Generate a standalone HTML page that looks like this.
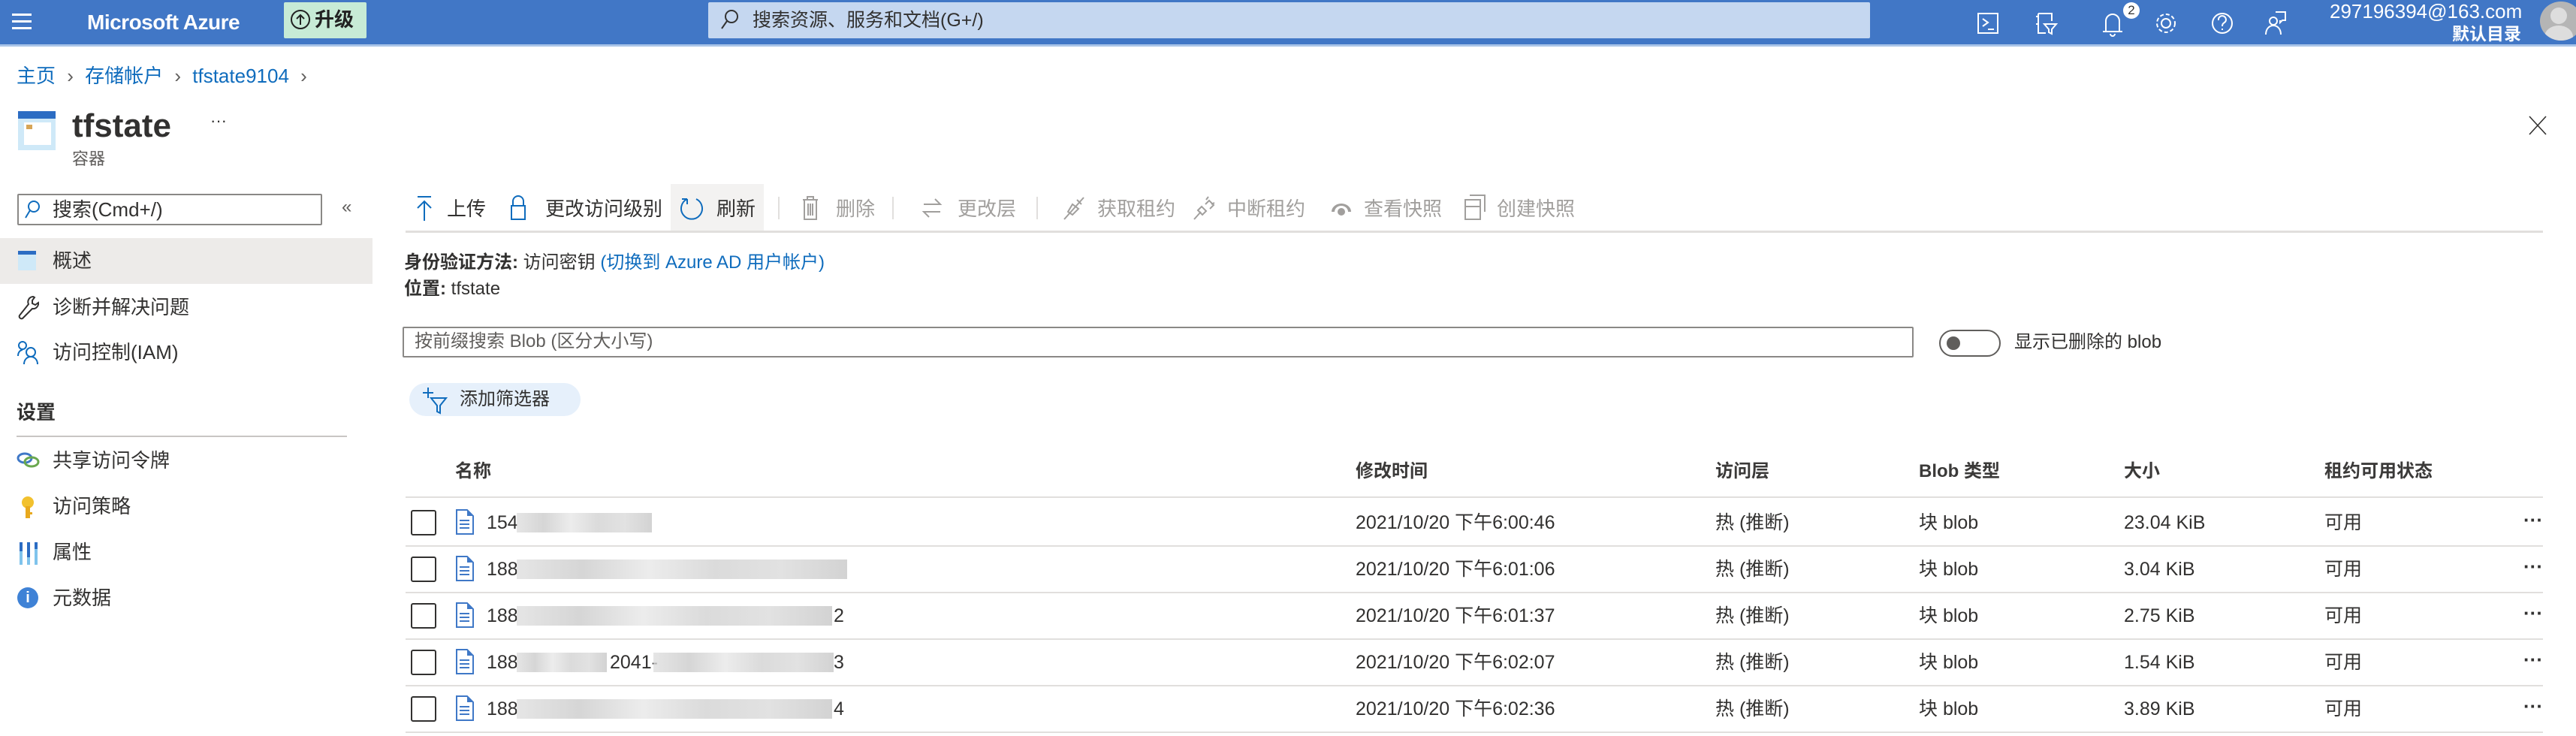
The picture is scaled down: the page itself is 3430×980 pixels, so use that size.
<!DOCTYPE html>
<html><head><meta charset="utf-8">
<style>
*{margin:0;padding:0;box-sizing:border-box}
body{width:3430px;height:980px;overflow:hidden;background:#fff;font-family:"Liberation Sans","Noto Sans CJK SC",sans-serif;color:#323130;position:relative}
.a{position:absolute;white-space:nowrap}
.t{font-size:25px;line-height:30px}
.top{position:absolute;left:0;top:0;width:3430px;height:62px;background:#4177c6;border-bottom:3px solid #a9c4e8}
.w{color:#fff}
.dis{color:#a19f9d}
.blue{color:#0f6cbd}
.hl{position:absolute;height:1px;background:#e1dfdd;left:540px;width:2846px}
.cb{position:absolute;left:547px;width:34px;height:34px;border:2px solid #323130;border-radius:3px}
.blur{position:absolute;height:26px;background:linear-gradient(90deg,#ddd,#c8c8c8 20%,#e6e6e6 40%,#cfcfcf 60%,#d8d8d8 80%,#c4c4c4);opacity:.75}
.hd{font-weight:bold;color:#3b3a39}
.dots{position:absolute;left:3360px;font-size:26px;font-weight:bold;line-height:20px}
</style></head><body>
<div class="top"></div>
<div class="a" style="left:16px;top:18px;width:26px;height:3px;background:#fff;box-shadow:0 9px 0 #fff,0 18px 0 #fff"></div>
<div class="a w" style="left:116px;top:12px;font-size:28px;line-height:36px;font-weight:bold;letter-spacing:-0.5px">Microsoft Azure</div>
<div class="a" style="left:378px;top:3px;width:110px;height:48px;background:#c7ebd6;border-radius:2px"></div>
<svg class="a" style="left:386px;top:12px" width="28" height="28" viewBox="0 0 28 28" fill="none" stroke="#222" stroke-width="2"><circle cx="14" cy="14" r="12"/><path d="M14 21V8M9 13l5-5 5 5"/></svg>
<div class="a" style="left:419px;top:9px;font-size:26px;font-weight:bold;line-height:34px;color:#222">升级</div>
<div class="a" style="left:943px;top:3px;width:1547px;height:48px;background:#c5d7f0;border-radius:2px"></div>
<svg class="a" style="left:958px;top:12px" width="26" height="28" viewBox="0 0 26 28"><circle cx="16" cy="10" r="8" fill="none" stroke="#333" stroke-width="2"/><line x1="10" y1="16" x2="3" y2="26" stroke="#333" stroke-width="2"/></svg>
<div class="a" style="left:1002px;top:11px;font-size:25px;line-height:32px;color:#323130">搜索资源、服务和文档(G+/)</div>
<svg class="a" style="left:2584px;top:10px" width="560" height="42" viewBox="0 0 560 42" fill="none" stroke="#fff" stroke-width="2">
<rect x="50" y="8" width="26" height="26"/><path d="M56 15l7 5-7 5M63 29h8"/>
<path d="M130 8h18v10M130 8v26h10M130 12h-3M130 22h-3M138 22h16l-6 7v6l-4-2v-4z"/>
<path d="M220 32V18a9 9 0 0118 0v14zM216 32h26M226 35a3 3 0 006 0"/>
<circle cx="300" cy="21" r="6"/><circle cx="300" cy="21" r="12" stroke-dasharray="5 3"/>
<circle cx="375" cy="21" r="13"/><path d="M370 17a5 5 0 119 2c-2 2-4 2-4 6M375 28v2"/>
<circle cx="443" cy="18" r="5"/><path d="M433 36c0-8 5-12 10-12s10 4 10 12M446 6h13v11h-4l-3 3v-3"/>
</svg>
<div class="a" style="left:2827px;top:3px;width:22px;height:22px;border-radius:50%;background:#fff;color:#333;font-size:17px;line-height:22px;text-align:center">2</div>
<div class="a w" style="left:3102px;top:0px;font-size:26px;line-height:30px;width:255px;text-align:right">297196394@163.com</div>
<div class="a w" style="left:3102px;top:30px;font-size:23px;line-height:30px;width:255px;text-align:right;font-weight:bold">默认目录</div>
<div class="a" style="left:3382px;top:2px;width:56px;height:52px;border-radius:50%;background:#b5b5b5;overflow:hidden"><div style="position:absolute;left:14px;top:8px;width:22px;height:22px;border-radius:50%;background:#ddd"></div><div style="position:absolute;left:6px;top:32px;width:38px;height:30px;border-radius:50%;background:#ddd"></div></div>

<div class="a blue" style="left:22px;top:85px;font-size:26px;line-height:32px">主页 <span style="color:#605e5c;margin:0 8px">›</span> 存储帐户 <span style="color:#605e5c;margin:0 8px">›</span> tfstate9104 <span style="color:#605e5c;margin:0 8px">›</span></div>

<div class="a" style="left:24px;top:148px;width:50px;height:52px;background:#cfe9f8;border-top:10px solid #2b6cc3"></div>
<div class="a" style="left:32px;top:163px;width:36px;height:30px;background:#fff"></div>
<div class="a" style="left:35px;top:166px;width:8px;height:6px;background:#d7a557"></div>
<div class="a" style="left:96px;top:140px;font-size:44px;line-height:56px;font-weight:bold;color:#323130">tfstate</div>
<div class="a" style="left:280px;top:148px;font-size:22px;color:#323130">···</div>
<div class="a" style="left:96px;top:197px;font-size:22px;line-height:30px;color:#605e5c">容器</div>
<svg class="a" style="left:3366px;top:153px" width="26" height="28" viewBox="0 0 26 28" stroke="#323130" stroke-width="1.6"><path d="M2 2l22 24M24 2L2 26"/></svg>

<div class="a" style="left:23px;top:258px;width:406px;height:42px;border:2px solid #8a8886;border-radius:2px"></div>
<svg class="a" style="left:32px;top:266px" width="22" height="26" viewBox="0 0 22 26"><circle cx="13" cy="9" r="7" fill="none" stroke="#0f6cbd" stroke-width="2"/><line x1="8" y1="14" x2="2" y2="24" stroke="#0f6cbd" stroke-width="2"/></svg>
<div class="a t" style="left:70px;top:264px;font-size:26px">搜索(Cmd+/)</div>
<div class="a" style="left:455px;top:262px;font-size:24px;color:#605e5c">«</div>
<div class="a" style="left:0;top:317px;width:496px;height:61px;background:#edebe9"></div>
<div class="a" style="left:24px;top:334px;width:24px;height:26px;background:#cfe9f8;border-top:5px solid #2b6cc3"></div>
<div class="a t" style="left:70px;top:332px;font-size:26px">概述</div>
<svg class="a" style="left:22px;top:392px" width="30" height="34" viewBox="0 0 30 34" fill="none" stroke="#323130" stroke-width="2"><path d="M22 3a7 7 0 00-6 10L4 28a3 3 0 004 4l13-13a7 7 0 008-8l-4 3-4-2v-4l3-4a7 7 0 00-2-1z"/></svg>
<div class="a t" style="left:70px;top:394px;font-size:26px">诊断并解决问题</div>
<svg class="a" style="left:22px;top:452px" width="30" height="34" viewBox="0 0 30 34" fill="none" stroke="#0f6cbd" stroke-width="2"><circle cx="8" cy="8" r="5"/><circle cx="19" cy="17" r="6"/><path d="M2 22c0-5 3-8 6-8M10 33c0-6 4-10 9-10s9 4 9 10"/></svg>
<div class="a t" style="left:70px;top:454px;font-size:26px">访问控制(IAM)</div>
<div class="a t" style="left:22px;top:534px;font-size:26px;font-weight:bold">设置</div>
<div class="a" style="left:22px;top:580px;width:440px;height:2px;background:#c8c6c4"></div>
<svg class="a" style="left:22px;top:602px" width="32" height="22" viewBox="0 0 32 22" fill="none" stroke-width="3"><ellipse cx="11" cy="8" rx="9" ry="6" stroke="#3f78c7"/><ellipse cx="20" cy="13" rx="9" ry="6" stroke="#6aa84f"/></svg>
<div class="a t" style="left:70px;top:598px;font-size:26px">共享访问令牌</div>
<svg class="a" style="left:26px;top:660px" width="24" height="32" viewBox="0 0 24 32"><circle cx="11" cy="9" r="8" fill="#f2c12e"/><rect x="8" y="14" width="6" height="16" fill="#e8a91e"/><rect x="13" y="22" width="4" height="3" fill="#e8a91e"/></svg>
<div class="a t" style="left:70px;top:659px;font-size:26px">访问策略</div>
<svg class="a" style="left:25px;top:722px" width="26" height="30" viewBox="0 0 26 30"><rect x="1" y="0" width="4" height="30" fill="#7fc3ec"/><rect x="1" y="0" width="4" height="12" fill="#2b6cc3"/><rect x="11" y="0" width="4" height="30" fill="#7fc3ec"/><rect x="11" y="0" width="4" height="20" fill="#2b6cc3"/><rect x="21" y="0" width="4" height="30" fill="#7fc3ec"/><rect x="21" y="0" width="4" height="9" fill="#2b6cc3"/></svg>
<div class="a t" style="left:70px;top:720px;font-size:26px">属性</div>
<div class="a" style="left:23px;top:782px;width:28px;height:28px;border-radius:50%;background:#3f82d6;color:#fff;font-size:20px;font-weight:bold;line-height:28px;text-align:center">i</div>
<div class="a t" style="left:70px;top:781px;font-size:26px">元数据</div>

<div class="a" style="left:893px;top:245px;width:124px;height:63px;background:#f3f2f1"></div>
<div class="a" style="left:540px;top:307px;width:2846px;height:3px;background:#e1dfdd"></div>
<svg class="a" style="left:550px;top:260px" width="30" height="36" viewBox="0 0 30 36" fill="none" stroke="#0f6cbd" stroke-width="2"><path d="M6 2h18M15 34V8M6 17l9-9 9 9"/></svg>
<div class="a t" style="left:595px;top:263px;font-size:26px">上传</div>
<svg class="a" style="left:678px;top:258px" width="24" height="36" viewBox="0 0 24 36" fill="none" stroke="#0f6cbd" stroke-width="2"><path d="M5 16V10a7 7 0 0114 0v6M3 16h18v18H3z"/></svg>
<div class="a t" style="left:726px;top:263px;font-size:26px">更改访问级别</div>
<svg class="a" style="left:905px;top:260px" width="32" height="34" viewBox="0 0 32 34" fill="none" stroke="#0f6cbd" stroke-width="2"><path d="M10 5A14 14 0 1022 5M10 5v7M10 5H3"/></svg>
<div class="a t" style="left:954px;top:263px;font-size:26px">刷新</div>
<div class="a" style="left:1036px;top:262px;width:2px;height:30px;background:#e1dfdd"></div>
<svg class="a dis" style="left:1068px;top:259px" width="22" height="36" viewBox="0 0 22 36" fill="none" stroke="#a19f9d" stroke-width="2"><path d="M1 7h20M7 7V3h8v4M3 7v26h16V7M8 12v16M11 12v16M14 12v16"/></svg>
<div class="a t dis" style="left:1113px;top:263px;font-size:26px">删除</div>
<div class="a" style="left:1188px;top:262px;width:2px;height:30px;background:#e1dfdd"></div>
<svg class="a" style="left:1226px;top:260px" width="30" height="34" viewBox="0 0 30 34" fill="none" stroke="#a19f9d" stroke-width="2"><path d="M4 12h22l-7-7M26 22H4l7 7"/></svg>
<div class="a t dis" style="left:1275px;top:263px;font-size:26px">更改层</div>
<div class="a" style="left:1380px;top:262px;width:2px;height:30px;background:#e1dfdd"></div>
<svg class="a" style="left:1414px;top:260px" width="32" height="34" viewBox="0 0 32 34" fill="none" stroke="#a19f9d" stroke-width="2"><path d="M3 32L29 3M8 22l6-10 8 6-8 8zM20 6l6 6"/></svg>
<div class="a t dis" style="left:1461px;top:263px;font-size:26px">获取租约</div>
<svg class="a" style="left:1587px;top:260px" width="32" height="34" viewBox="0 0 32 34" fill="none" stroke="#a19f9d" stroke-width="2"><path d="M3 32L12 22M8 20l5-5 6 6-5 5zM18 12l5-5 6 6-5 5M22 2l-3 4M30 10l-4 2"/></svg>
<div class="a t dis" style="left:1634px;top:263px;font-size:26px">中断租约</div>
<svg class="a" style="left:1772px;top:268px" width="28" height="20" viewBox="0 0 28 20" fill="#a19f9d"><path d="M1 14a13 11 0 0126 0h-4a9 8 0 00-18 0z"/><circle cx="14" cy="14" r="5"/></svg>
<div class="a t dis" style="left:1816px;top:263px;font-size:26px">查看快照</div>
<svg class="a" style="left:1949px;top:258px" width="30" height="36" viewBox="0 0 30 36" fill="none" stroke="#a19f9d" stroke-width="2"><path d="M8 2h20v22M2 8h20v26H2zM2 17h20"/></svg>
<div class="a t dis" style="left:1993px;top:263px;font-size:26px">创建快照</div>

<div class="a t" style="left:538px;top:335px;font-size:24px"><b>身份验证方法:</b> 访问密钥 <span class="blue">(切换到 Azure AD 用户帐户)</span></div>
<div class="a t" style="left:538px;top:370px;font-size:24px"><b>位置:</b> tfstate</div>

<div class="a" style="left:536px;top:435px;width:2012px;height:41px;border:2px solid #8a8886;border-radius:2px"></div>
<div class="a t" style="left:552px;top:440px;font-size:24px;color:#605e5c">按前缀搜索 Blob (区分大小写)</div>
<div class="a" style="left:2582px;top:439px;width:82px;height:36px;border:2px solid #605e5c;border-radius:18px"></div>
<div class="a" style="left:2592px;top:448px;width:18px;height:18px;border-radius:50%;background:#605e5c"></div>
<div class="a t" style="left:2682px;top:441px;font-size:24px">显示已删除的 blob</div>
<div class="a" style="left:545px;top:510px;width:228px;height:44px;border-radius:22px;background:#e6f0fb"></div>
<svg class="a" style="left:562px;top:514px" width="34" height="38" viewBox="0 0 34 38" fill="none" stroke="#0f6cbd" stroke-width="2"><path d="M8 2v14M1 9h14M12 16h20l-8 10v10l-4-2v-8z"/></svg>
<div class="a t" style="left:612px;top:517px;font-size:24px">添加筛选器</div>

<div class="a t hd" style="left:606px;top:613px;font-size:24px">名称</div>
<div class="a t hd" style="left:1805px;top:613px;font-size:24px">修改时间</div>
<div class="a t hd" style="left:2284px;top:613px;font-size:24px">访问层</div>
<div class="a t hd" style="left:2555px;top:613px;font-size:24px">Blob 类型</div>
<div class="a t hd" style="left:2828px;top:613px;font-size:24px">大小</div>
<div class="a t hd" style="left:3095px;top:613px;font-size:24px">租约可用状态</div>
<div class="hl" style="top:661px;height:2px"></div>
<div class="hl" style="top:726px;height:2px"></div>
<div class="hl" style="top:788px;height:2px"></div>
<div class="hl" style="top:850px;height:2px"></div>
<div class="hl" style="top:912px;height:2px"></div>
<div class="hl" style="top:974px;height:2px"></div>

<div class="cb" style="top:679px"></div>
<svg class="a" style="left:607px;top:678px" width="24" height="34" viewBox="0 0 24 34"><path d="M1 1h14l8 8v24H1z" fill="#fff" stroke="#3f78c7" stroke-width="2"/><path d="M15 1v8h8" fill="#3f78c7"/><path d="M5 15h13M5 20h13M5 25h13" stroke="#3f78c7" stroke-width="2"/></svg>
<div class="a t" style="left:648px;top:681px">154</div><div class="blur" style="left:688px;top:683px;width:180px"></div>
<div class="a t" style="left:1805px;top:681px">2021/10/20 下午6:00:46</div>
<div class="a t" style="left:2284px;top:681px">热 (推断)</div>
<div class="a t" style="left:2555px;top:681px">块 blob</div>
<div class="a t" style="left:2828px;top:681px">23.04 KiB</div>
<div class="a t" style="left:3095px;top:681px">可用</div>
<div class="dots" style="top:682px">···</div>

<div class="cb" style="top:741px"></div>
<svg class="a" style="left:607px;top:740px" width="24" height="34" viewBox="0 0 24 34"><path d="M1 1h14l8 8v24H1z" fill="#fff" stroke="#3f78c7" stroke-width="2"/><path d="M15 1v8h8" fill="#3f78c7"/><path d="M5 15h13M5 20h13M5 25h13" stroke="#3f78c7" stroke-width="2"/></svg>
<div class="a t" style="left:648px;top:743px">188</div><div class="blur" style="left:688px;top:745px;width:440px"></div>
<div class="a t" style="left:1805px;top:743px">2021/10/20 下午6:01:06</div>
<div class="a t" style="left:2284px;top:743px">热 (推断)</div>
<div class="a t" style="left:2555px;top:743px">块 blob</div>
<div class="a t" style="left:2828px;top:743px">3.04 KiB</div>
<div class="a t" style="left:3095px;top:743px">可用</div>
<div class="dots" style="top:744px">···</div>

<div class="cb" style="top:803px"></div>
<svg class="a" style="left:607px;top:802px" width="24" height="34" viewBox="0 0 24 34"><path d="M1 1h14l8 8v24H1z" fill="#fff" stroke="#3f78c7" stroke-width="2"/><path d="M15 1v8h8" fill="#3f78c7"/><path d="M5 15h13M5 20h13M5 25h13" stroke="#3f78c7" stroke-width="2"/></svg>
<div class="a t" style="left:648px;top:805px">188</div><div class="blur" style="left:688px;top:807px;width:420px"></div><div class="a t" style="left:1110px;top:805px">2</div>
<div class="a t" style="left:1805px;top:805px">2021/10/20 下午6:01:37</div>
<div class="a t" style="left:2284px;top:805px">热 (推断)</div>
<div class="a t" style="left:2555px;top:805px">块 blob</div>
<div class="a t" style="left:2828px;top:805px">2.75 KiB</div>
<div class="a t" style="left:3095px;top:805px">可用</div>
<div class="dots" style="top:806px">···</div>

<div class="cb" style="top:865px"></div>
<svg class="a" style="left:607px;top:864px" width="24" height="34" viewBox="0 0 24 34"><path d="M1 1h14l8 8v24H1z" fill="#fff" stroke="#3f78c7" stroke-width="2"/><path d="M15 1v8h8" fill="#3f78c7"/><path d="M5 15h13M5 20h13M5 25h13" stroke="#3f78c7" stroke-width="2"/></svg>
<div class="a t" style="left:648px;top:867px">188</div><div class="blur" style="left:688px;top:869px;width:120px"></div><div class="a t" style="left:812px;top:867px">2041-</div><div class="blur" style="left:870px;top:869px;width:240px"></div><div class="a t" style="left:1110px;top:867px">3</div>
<div class="a t" style="left:1805px;top:867px">2021/10/20 下午6:02:07</div>
<div class="a t" style="left:2284px;top:867px">热 (推断)</div>
<div class="a t" style="left:2555px;top:867px">块 blob</div>
<div class="a t" style="left:2828px;top:867px">1.54 KiB</div>
<div class="a t" style="left:3095px;top:867px">可用</div>
<div class="dots" style="top:868px">···</div>

<div class="cb" style="top:927px"></div>
<svg class="a" style="left:607px;top:926px" width="24" height="34" viewBox="0 0 24 34"><path d="M1 1h14l8 8v24H1z" fill="#fff" stroke="#3f78c7" stroke-width="2"/><path d="M15 1v8h8" fill="#3f78c7"/><path d="M5 15h13M5 20h13M5 25h13" stroke="#3f78c7" stroke-width="2"/></svg>
<div class="a t" style="left:648px;top:929px">188</div><div class="blur" style="left:688px;top:931px;width:420px"></div><div class="a t" style="left:1110px;top:929px">4</div>
<div class="a t" style="left:1805px;top:929px">2021/10/20 下午6:02:36</div>
<div class="a t" style="left:2284px;top:929px">热 (推断)</div>
<div class="a t" style="left:2555px;top:929px">块 blob</div>
<div class="a t" style="left:2828px;top:929px">3.89 KiB</div>
<div class="a t" style="left:3095px;top:929px">可用</div>
<div class="dots" style="top:930px">···</div>
</body></html>
